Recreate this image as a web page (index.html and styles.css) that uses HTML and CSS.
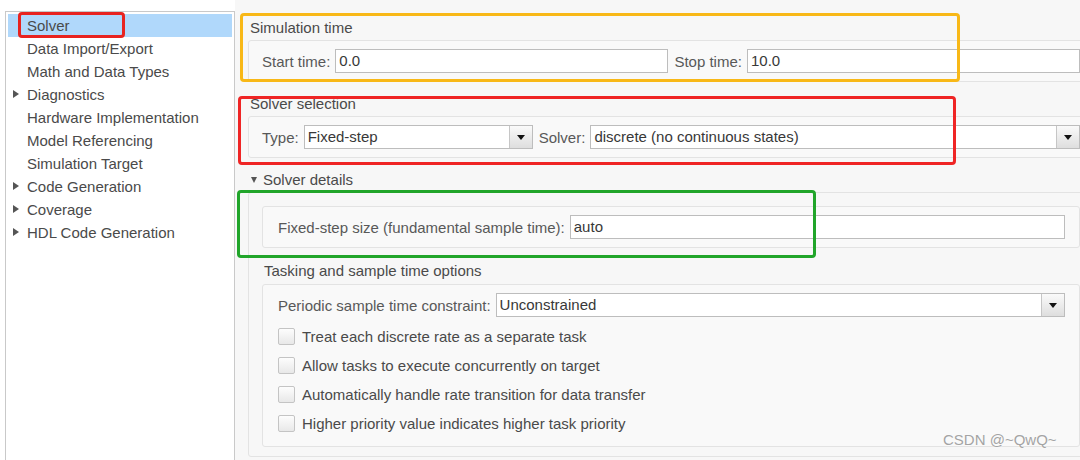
FILE: index.html
```html
<!DOCTYPE html>
<html lang="en">
<head>
    <meta charset="UTF-8">
    <title>Configuration Parameters - Solver</title>
    <link rel="stylesheet" href="styles.css">
</head>
<body>

    <!-- 왼쪽 트리 -->
    <div class="tree-wrap">
        <ul class="tree">
            <li class="item selected">Solver</li>
            <li class="item">Data Import/Export</li>
            <li class="item">Math and Data Types</li>
            <li class="item"><span class="arrow"></span>Diagnostics</li>
            <li class="item">Hardware Implementation</li>
            <li class="item">Model Referencing</li>
            <li class="item">Simulation Target</li>
            <li class="item"><span class="arrow"></span>Code Generation</li>
            <li class="item"><span class="arrow"></span>Coverage</li>
            <li class="item"><span class="arrow"></span>HDL Code Generation</li>
        </ul>
    </div>

    <!-- 오른쪽 설정 -->
    <div class="pane">
        <div class="sec-title">Simulation time</div>
        <div class="group row">
            <span class="label">Start time:</span>
            <div class="field grow">0.0</div>
            <span class="label gap">Stop time:</span>
            <div class="field grow">10.0</div>
        </div>

        <div class="sec-title">Solver selection</div>
        <div class="group row">
            <span class="label">Type:</span>
            <div class="select type-select">
                <span class="value">Fixed-step</span>
                <span class="drop"><span class="tri"></span></span>
            </div>
            <span class="label gap">Solver:</span>
            <div class="select grow">
                <span class="value">discrete (no continuous states)</span>
                <span class="drop"><span class="tri"></span></span>
            </div>
        </div>

        <div class="sec-title details-title"><span class="down"></span>Solver details</div>
        <div class="details">
            <div class="group inner row">
                <span class="label">Fixed-step size (fundamental sample time):</span>
                <div class="field grow">auto</div>
            </div>

            <div class="sub-title">Tasking and sample time options</div>
            <div class="group inner tasking">
                <div class="row">
                    <span class="label">Periodic sample time constraint:</span>
                    <div class="select grow">
                        <span class="value">Unconstrained</span>
                        <span class="drop"><span class="tri"></span></span>
                    </div>
                </div>
                <div class="checks">
                    <div class="check"><span class="box"></span>Treat each discrete rate as a separate task</div>
                    <div class="check"><span class="box"></span>Allow tasks to execute concurrently on target</div>
                    <div class="check"><span class="box"></span>Automatically handle rate transition for data transfer</div>
                    <div class="check"><span class="box"></span>Higher priority value indicates higher task priority</div>
                </div>
            </div>
        </div>
    </div>

    <!-- 표시용 박스 -->
    <div class="mark mark-solver"></div>
    <div class="mark mark-time"></div>
    <div class="mark mark-select"></div>
    <div class="mark mark-step"></div>

    <div class="watermark">CSDN @~QwQ~</div>

</body>
</html>
```

FILE: styles.css
```css
body {
    margin: 0;
    width: 1080px;
    height: 460px;
    overflow: hidden;
    position: relative;
    display: flex;
    font-family: "Liberation Sans", Arial, sans-serif;
    font-size: 15px;
    color: #4a4a4a;
    background-color: #fff;
}

/* 트리 */
.tree-wrap {
    width: 235px;
    flex: none;
    padding: 11px 0 0 5px;
    box-sizing: border-box;
}
.tree {
    list-style: none;
    margin: 0;
    padding: 2px 2px;
    height: 460px;
    border: 1px solid #c9c9c9;
    border-bottom: none;
    background: #fff;
}
.item {
    position: relative;
    height: 23px;
    line-height: 23px;
    padding-left: 19px;
    color: #4a4a4a;
    white-space: nowrap;
}
.item.selected {
    background-color: #b0d8fb;
}
.arrow {
    position: absolute;
    left: 5px;
    top: 7px;
    width: 0;
    height: 0;
    border-left: 6px solid #555;
    border-top: 4px solid transparent;
    border-bottom: 4px solid transparent;
}

/* 오른쪽 */
.pane {
    flex: 1;
    background-color: #f7f7f7;
    padding: 19px 0 0 13px;
    margin-right: -15px;
}
.sec-title {
    line-height: 18px;
    margin: 0 0 3px 2px;
    color: #4a4a4a;
}
.group {
    border: 1px solid #e3e3e3;
    border-radius: 3px;
    background-color: #f9f9f9;
    padding: 8px 14px 8px 13px;
    margin-bottom: 13px;
}
.row {
    display: flex;
    align-items: center;
}
.label {
    color: #585858;
    margin-right: 5px;
    white-space: nowrap;
}
.label.gap {
    margin-left: 6px;
}
.field {
    height: 24px;
    line-height: 22px;
    box-sizing: border-box;
    border: 1px solid #bdbdbd;
    background: #fff;
    padding-left: 3px;
    color: #383838;
}
.grow {
    flex: 1;
}
.select {
    display: flex;
    height: 24px;
    box-sizing: border-box;
    border: 1px solid #bdbdbd;
    background: #fff;
    color: #383838;
}
.type-select {
    width: 229px;
    flex: none;
}
.select .value {
    flex: 1;
    line-height: 22px;
    padding-left: 3px;
    white-space: nowrap;
}
.drop {
    width: 22px;
    border-left: 1px solid #c6c6c6;
    background: linear-gradient(#fafafa, #dedede);
    display: flex;
    align-items: center;
    justify-content: center;
}
.tri {
    width: 0;
    height: 0;
    border-top: 5px solid #111;
    border-left: 4px solid transparent;
    border-right: 4px solid transparent;
}

/* 상세 */
.details-title {
    margin-left: 3px;
    display: flex;
    align-items: center;
}
.down {
    width: 0;
    height: 0;
    border-top: 6px solid #555;
    border-left: 3.5px solid transparent;
    border-right: 3.5px solid transparent;
    margin-right: 6px;
}
.details {
    border: 1px solid #e3e3e3;
    border-radius: 3px;
    padding: 13px 14px 9px 13px;
}
.group.inner {
    padding-left: 15px;
    margin-bottom: 0;
}
.sub-title {
    line-height: 18px;
    margin: 14px 0 4px 2px;
    color: #4a4a4a;
}
.tasking {
    padding-bottom: 8px;
}
.checks {
    margin-top: 5px;
}
.check {
    display: flex;
    align-items: center;
    height: 29px;
    color: #4a4a4a;
}
.box {
    width: 17px;
    height: 17px;
    box-sizing: border-box;
    border: 1px solid #c4c4c4;
    border-radius: 2px;
    background: linear-gradient(#fdfdfd, #e8e8e8);
    margin-right: 7px;
}

/* 표시 박스 */
.mark {
    position: absolute;
    border: 3px solid;
    border-radius: 4px;
    box-sizing: border-box;
}
.mark-solver {
    left: 18px;
    top: 12px;
    width: 107px;
    height: 26px;
    border-color: #e8231f;
}
.mark-time {
    left: 240px;
    top: 13px;
    width: 720px;
    height: 69px;
    border-color: #f8b817;
}
.mark-select {
    left: 238px;
    top: 96px;
    width: 718px;
    height: 69px;
    border-color: #ef2525;
}
.mark-step {
    left: 237px;
    top: 190px;
    width: 579px;
    height: 68px;
    border-color: #21a52a;
}

.watermark {
    position: absolute;
    left: 943px;
    top: 431px;
    font-size: 15px;
    color: #a4a4a4;
    text-shadow: 0 0 2px #fff;
}
```
